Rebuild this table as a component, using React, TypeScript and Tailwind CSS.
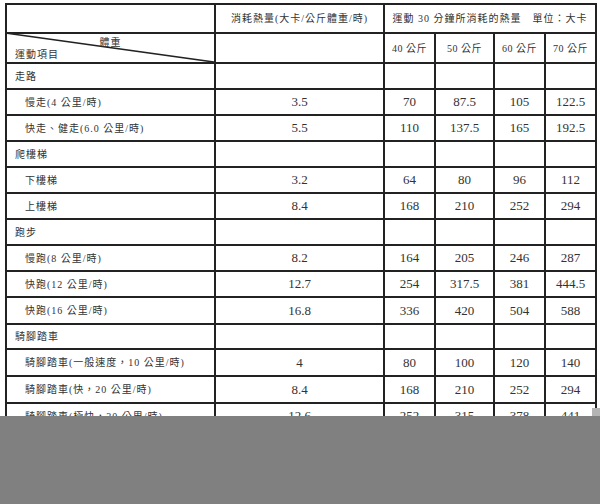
import React from "react";

type Row = { label: string; sub?: boolean; v?: string[] };

const rows: Row[] = [
  { label: "走路" },
  { label: "慢走(4 公里/時)", sub: true, v: ["3.5", "70", "87.5", "105", "122.5"] },
  { label: "快走、健走(6.0 公里/時)", sub: true, v: ["5.5", "110", "137.5", "165", "192.5"] },
  { label: "爬樓梯" },
  { label: "下樓梯", sub: true, v: ["3.2", "64", "80", "96", "112"] },
  { label: "上樓梯", sub: true, v: ["8.4", "168", "210", "252", "294"] },
  { label: "跑步" },
  { label: "慢跑(8 公里/時)", sub: true, v: ["8.2", "164", "205", "246", "287"] },
  { label: "快跑(12 公里/時)", sub: true, v: ["12.7", "254", "317.5", "381", "444.5"] },
  { label: "快跑(16 公里/時)", sub: true, v: ["16.8", "336", "420", "504", "588"] },
  { label: "騎腳踏車" },
  { label: "騎腳踏車(一般速度，10 公里/時)", sub: true, v: ["4", "80", "100", "120", "140"] },
  { label: "騎腳踏車(快，20 公里/時)", sub: true, v: ["8.4", "168", "210", "252", "294"] },
  { label: "騎腳踏車(極快，30 公里/時)", sub: true, v: ["12.6", "252", "315", "378", "441"] },
];

const font = { fontFamily: '"Liberation Serif", "Noto Sans CJK TC", serif' };

function Cell({ children, className = "" }: { children?: React.ReactNode; className?: string }) {
  return <div className={`bg-white flex items-center text-[#333] ${className}`}>{children}</div>;
}

export default function App() {
  return (
    <div className="relative w-[600px] h-[504px] bg-white flex flex-col overflow-hidden" style={font}>
      <div className="h-[416px] shrink-0 overflow-hidden pl-[5px] pt-[3px]">
        <div className="grid w-[592px] bg-[#222] gap-[2px] p-[2px] grid-cols-[207px_167px_49px_57px_49px_49px] grid-rows-[27px_28px_24px_24px_24px_24px_24px_24px_24px_24px_24px_25px_23px_25px_25px_24px]">
          <Cell />
          <Cell className="justify-center text-[10px] tracking-[1px]">消耗熱量(大卡/公斤體重/時)</Cell>
          <Cell className="col-span-4 justify-center text-[10px] tracking-[1px]">運動 30 分鐘所消耗的熱量　單位：大卡</Cell>

          <div className="relative bg-white text-[#333] text-[10px] tracking-[1px]">
            <svg className="absolute inset-0 w-full h-full" preserveAspectRatio="none" viewBox="0 0 207 28">
              <line x1="-2" y1="-1" x2="207" y2="28" stroke="#222" strokeWidth="1.6" />
            </svg>
            <div className="absolute left-0 right-0 top-[2px] text-center leading-[14px]">體重</div>
            <div className="absolute left-[8px] bottom-[0px] leading-[14px]">運動項目</div>
          </div>
          <Cell />
          {["40 公斤", "50 公斤", "60 公斤", "70 公斤"].map((t) => (
            <Cell key={t} className="justify-center text-[10px] tracking-[0.5px]">
              {t}
            </Cell>
          ))}

          {rows.map((r, i) => (
            <React.Fragment key={i}>
              <Cell className={`text-[10px] tracking-[1px] ${r.sub ? "pl-[18px]" : "pl-[8px]"}`}>{r.label}</Cell>
              {[0, 1, 2, 3, 4].map((j) => (
                <Cell key={j} className="justify-center text-[13px]">
                  {r.v ? r.v[j] : ""}
                </Cell>
              ))}
            </React.Fragment>
          ))}
        </div>
      </div>
      <div className="flex-1 bg-[#808080]" />
      <div className="absolute right-0 top-[408px] w-[8px] h-[8px] bg-[#b4b4b4]" />
    </div>
  );
}
